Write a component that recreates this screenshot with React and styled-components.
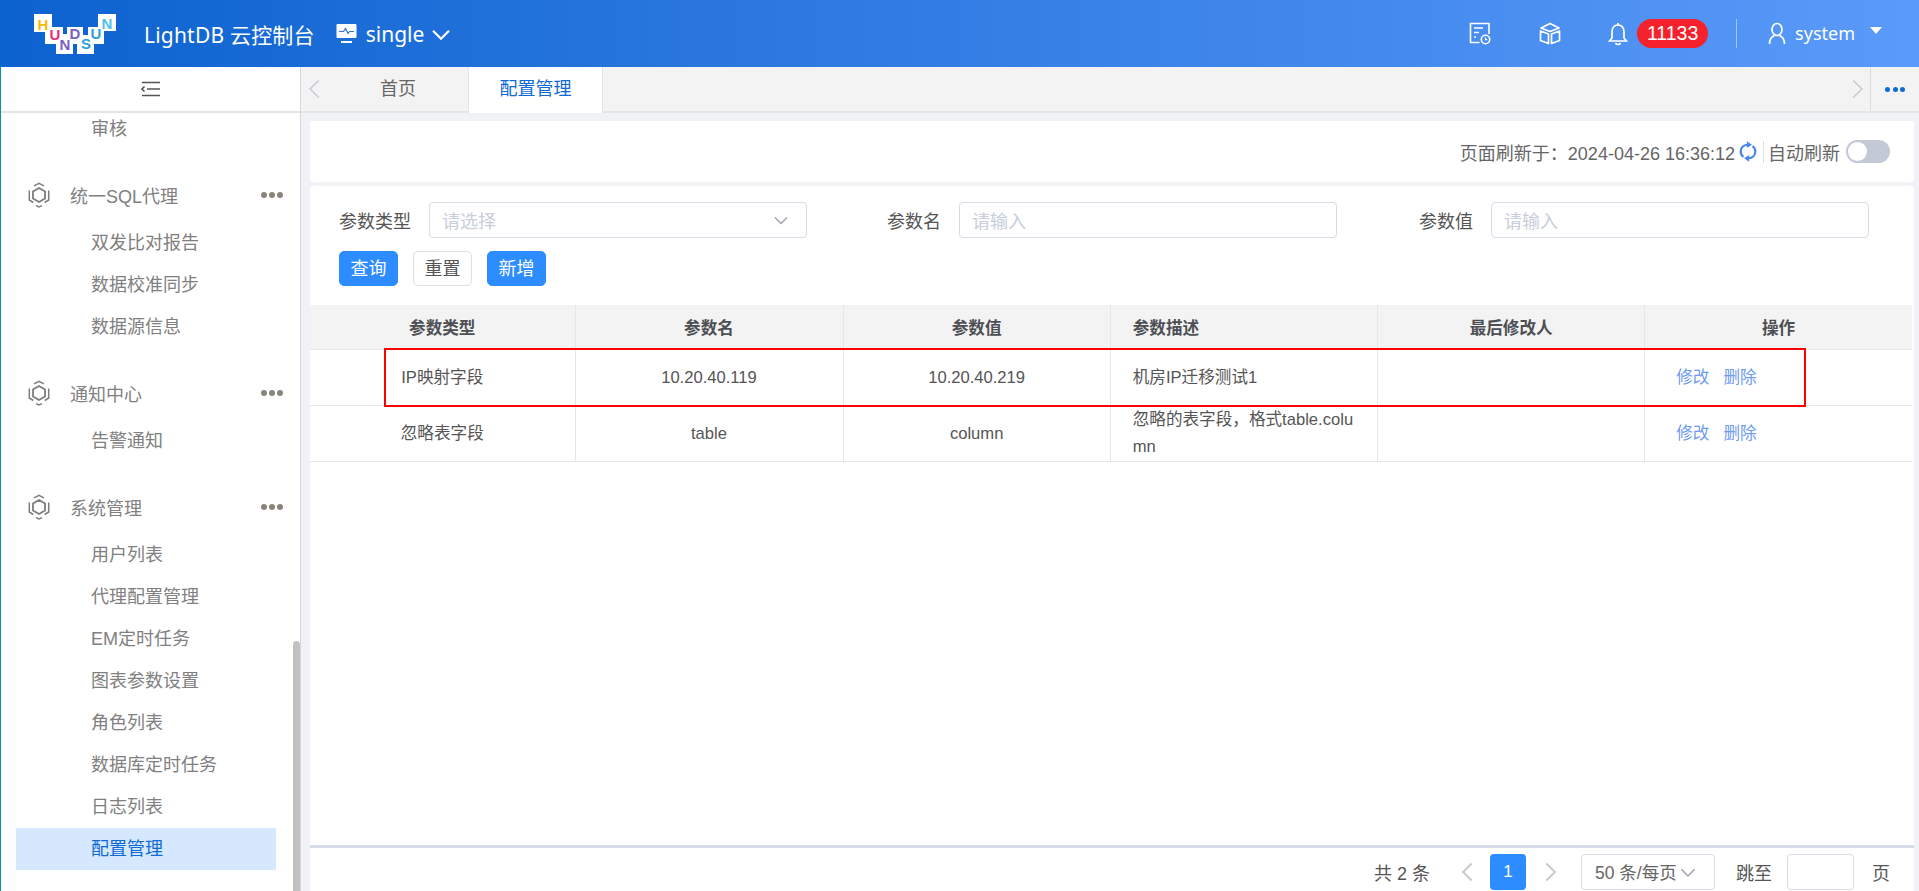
import styled, { createGlobalStyle } from "styled-components";

const GlobalStyle = createGlobalStyle`
  html, body {
    margin: 0;
    height: 100%;
    overflow: hidden;
    font-family: "Liberation Sans", "Noto Sans CJK SC", sans-serif;
    color: #555;
  }
  * { box-sizing: border-box; }
`;

const Page = styled.div`
  height: 100vh;
  display: flex;
  flex-direction: column;
  overflow: hidden;
`;

// top bar
const Header = styled.header`
  height: 67px;
  flex: none;
  display: flex;
  align-items: center;
  padding-left: 34px;
  color: #fff;
  background: linear-gradient(90deg, #0c62cf 0%, #5a9af9 100%);
`;

const Title = styled.div`
  margin-left: 28px;
  font-family: "Noto Sans", "Noto Sans CJK SC", sans-serif;
  font-size: 21px;
  letter-spacing: 0.2px;
`;

const Instance = styled.div`
  margin-left: 21px;
  display: flex;
  align-items: center;
  gap: 9px;
  font-family: "Noto Sans", "Noto Sans CJK SC", sans-serif;
  font-size: 21px;

  svg:last-child { margin-left: -4px; }
`;

const HeaderRight = styled.div`
  margin-left: auto;
  display: flex;
  align-items: center;
  padding-right: 37px;
`;

const HeaderIcon = styled.span`
  display: flex;
  margin-right: ${(p) => p.$gap}px;
`;

const Badge = styled.span`
  width: 71px;
  height: 29px;
  margin-left: 9px;
  border-radius: 15px;
  background: #f5222d;
  font-size: 19.5px;
  line-height: 29px;
  text-align: center;
`;

const HeaderDivider = styled.span`
  width: 1px;
  height: 29px;
  margin: 0 31px 0 28px;
  background: rgba(255, 255, 255, 0.45);
`;

const UserName = styled.span`
  margin: 0 15px 0 9px;
  font-family: "Noto Sans", sans-serif;
  font-size: 18px;
  position: relative;
  top: -1px;
`;

const Caret = styled.span`
  width: 0;
  height: 0;
  margin-top: -6px;
  border-left: 6px solid transparent;
  border-right: 6px solid transparent;
  border-top: 7px solid #fff;
`;

const Body = styled.div`
  flex: 1;
  min-height: 0;
  display: flex;
`;

// left menu
const Sidebar = styled.aside`
  width: 301px;
  flex: none;
  position: relative;
  display: flex;
  flex-direction: column;
  background: #fff;
  border-left: 1px solid #0a8fa8;
  border-right: 1px solid #d3d7e0;
  overflow: hidden;
`;

const Collapse = styled.div`
  height: 46px;
  flex: none;
  display: flex;
  align-items: center;
  justify-content: center;
  border-bottom: 2px solid #e4e4e4;
`;

const MenuList = styled.nav`
  margin-top: -5px;
  padding-right: 24px;
`;

const MenuItem = styled.div`
  height: 42px;
  margin-left: 15px;
  padding-left: 75px;
  font-size: 18px;
  line-height: 42px;
  color: ${(p) => (p.$active ? "#0e6ad6" : "#808080")};
  background: ${(p) => (p.$active ? "#d6e8fd" : "transparent")};
`;

const MenuGroup = styled.div`
  height: 54px;
  margin-top: 18px;
  padding: 0 0 0 27px;
  margin-right: -7px;
  display: flex;
  align-items: center;
  font-size: 18px;
  color: #808080;
`;

const GroupName = styled.span`
  margin-left: 20px;
`;

const Dots = styled.span`
  margin-left: auto;
  display: flex;
  gap: ${(p) => p.$gap}px;

  i {
    width: ${(p) => p.$size}px;
    height: ${(p) => p.$size}px;
    border-radius: 50%;
    background: ${(p) => p.$color};
  }
`;

const ScrollThumb = styled.div`
  position: absolute;
  right: 0;
  top: 574px;
  bottom: 0;
  width: 7px;
  border-radius: 4px 4px 0 0;
  background: #c1c1c1;
`;

const Main = styled.main`
  flex: 1;
  min-width: 0;
  display: flex;
  flex-direction: column;
  background: #f0f2f6;
`;

const TabBar = styled.div`
  height: 46px;
  flex: none;
  display: flex;
  background: #f3f3f3;
  border-bottom: 2px solid #e6e6e6;
`;

const TabArrow = styled.span`
  width: ${(p) => p.$w}px;
  display: flex;
  align-items: center;
  justify-content: center;
  color: #c6ccd6;
`;

const Tab = styled.div`
  width: ${(p) => p.$w}px;
  height: 46px;
  flex: none;
  font-size: 18px;
  line-height: 44px;
  text-align: center;
  color: ${(p) => (p.$active ? "#0e6ad6" : "#666")};
  background: ${(p) => (p.$active ? "#fff" : "transparent")};
  border-left: ${(p) => (p.$active ? "1px solid #e4e4e4" : "none")};
  border-right: ${(p) => (p.$active ? "1px solid #e4e4e4" : "none")};
`;

const TabEnd = styled.div`
  margin-left: auto;
  display: flex;
`;

const TabMore = styled.span`
  width: 49px;
  display: flex;
  align-items: center;
  justify-content: center;
  border-left: 1px solid #dcdcdc;

  span { margin-left: 0; }
`;

const Content = styled.div`
  flex: 1;
  min-height: 0;
  display: flex;
  flex-direction: column;
  gap: 4px;
  padding: 8px 5px 0 9px;
`;

const RefreshCard = styled.div`
  height: 61px;
  flex: none;
  display: flex;
  align-items: center;
  justify-content: flex-end;
  padding-right: 24px;
  background: #fff;
  border-radius: 3px;
  font-size: 18px;
  color: #666;
`;

const RefreshDivider = styled.span`
  width: 1px;
  height: 22px;
  margin: 0 4px;
  background: #dcdfe6;
`;

const RefreshButton = styled.span`
  display: flex;
  margin: 0 2px 0 4px;
`;

const Toggle = styled.span`
  width: 44px;
  height: 23px;
  margin-left: 6px;
  padding: 2px;
  border-radius: 12px;
  background: #c3cad6;

  i {
    display: block;
    width: 19px;
    height: 19px;
    border-radius: 50%;
    background: #fff;
  }
`;

const TableCard = styled.section`
  flex: 1;
  min-height: 0;
  display: flex;
  flex-direction: column;
  background: #fff;
  border-radius: 3px 3px 0 0;
`;

const FilterRow = styled.div`
  display: grid;
  grid-template-columns: 468px 530px 532px;
  margin: 16px 0 0 29px;
`;

const Field = styled.label`
  display: flex;
  align-items: center;
`;

const FieldLabel = styled.span`
  flex: 1;
  padding-right: ${(p) => (p.$first ? 0 : 18)}px;
  font-size: 18px;
  text-align: ${(p) => (p.$first ? "left" : "right")};
  color: #555;
`;

const FakeInput = styled.div`
  width: 378px;
  height: 36px;
  display: flex;
  align-items: center;
  justify-content: space-between;
  padding: 0 16px 0 12px;
  border: 1px solid #d8dce6;
  border-radius: 4px;
  font-size: 18px;
  color: #c8cedb;
`;

const ButtonRow = styled.div`
  display: flex;
  gap: 15px;
  margin: 13px 0 19px 29px;
`;

const Button = styled.button`
  width: 59px;
  height: 35px;
  padding: 0 0 3px;
  border: 1px solid ${(p) => (p.$primary ? "#2d8cff" : "#dcdfe6")};
  border-radius: 5px;
  font: inherit;
  font-size: 18px;
  color: ${(p) => (p.$primary ? "#fff" : "#555")};
  background: ${(p) => (p.$primary ? "#2d8cff" : "#fff")};
`;

const TableWrap = styled.div`
  position: relative;
  flex: 1;
  min-height: 0;
  margin-right: 2px;
`;

const Table = styled.table`
  width: 100%;
  table-layout: fixed;
  border-collapse: collapse;
  font-size: 16.6px;
  color: #555;
`;

const Th = styled.th`
  height: 44px;
  padding: 0;
  font-weight: 700;
  font-size: 16.6px;
  width: ${(p) => p.$w || "auto"};
  text-align: ${(p) => p.$align || "center"};
  padding-left: ${(p) => p.$pad || 0}px;
  color: #4d4f54;
  background: #f3f3f3;
  border-left: 1px solid #e6e6e6;
  border-bottom: 1px solid #e6e6e6;

  &:first-child { border-left: none; }
`;

const Td = styled.td`
  height: 56px;
  padding: 0 ${(p) => (p.$pad ? 20 : 0)}px 0 ${(p) => p.$pad || 0}px;
  text-align: ${(p) => (p.$pad ? "left" : "center")};
  line-height: 27px;
  word-break: break-all;
  border-left: 1px solid #e6e6e6;
  border-bottom: 1px solid #e6e6e6;

  &:first-child { border-left: none; }
`;

const RowAction = styled.a`
  margin-right: 14px;
  color: #6f9bef;
`;

// the red box somebody drew on the screenshot
const Annotation = styled.div`
  position: absolute;
  left: 74px;
  top: 43px;
  width: 1422px;
  height: 59px;
  border: 2px solid #ff0000;
  pointer-events: none;
`;

const Pager = styled.footer`
  height: 46px;
  flex: none;
  display: flex;
  align-items: center;
  justify-content: flex-end;
  padding: 4px 24px 0 0;
  border-top: 3px solid #d8dce8;
  font-size: 18px;
  color: #555;
`;

const PageArrow = styled.span`
  display: flex;
  margin: ${(p) => p.$margin};
  color: #c9c9c9;
`;

const PageNumber = styled.span`
  width: 36px;
  height: 36px;
  border-radius: 4px;
  background: #2d8cff;
  color: #fff;
  font-size: 17px;
  line-height: 36px;
  text-align: center;
`;

const PageSize = styled.div`
  width: 134px;
  height: 36px;
  margin-right: 21px;
  display: flex;
  align-items: center;
  gap: 1px;
  padding: 0 0 0 13px;
  border: 1px solid #d8dce6;
  border-radius: 4px;
  font-size: 17.5px;
  color: #666;
`;

const PageJump = styled.div`
  width: 67px;
  height: 36px;
  margin: 0 18px 0 15px;
  border: 1px solid #d8dce6;
  border-radius: 4px;
`;

const Logo = () => {
  const blocks = [
    [34, 17, 18, 18], [45, 30, 18, 17], [56, 37, 17, 20], [67, 30, 16, 17],
    [77, 38, 17, 19], [88, 30, 16, 17], [98, 17, 18, 17],
  ];
  const letters = [
    ["H", 43, 33, "#f9b90c"], ["U", 55, 43, "#e8307f"], ["N", 65, 53, "#7a5fc4"],
    ["D", 75, 42, "#7a5fc4"], ["S", 86, 52, "#2e9fd8"], ["U", 96, 42, "#2e9fd8"],
    ["N", 107, 32, "#4dc3ea"],
  ];
  return (
    <svg width="82" height="41" viewBox="34 16 82 41" aria-label="HUNDSUN">
      {blocks.map(([x, y, w, h], i) => (
        <rect key={i} x={x} y={y} width={w} height={h} fill="#fff" />
      ))}
      {letters.map(([t, x, y, c], i) => (
        <text key={i} x={x} y={y} fill={c} fontSize="15" fontWeight="700" textAnchor="middle" fontFamily="Liberation Sans, sans-serif">
          {t}
        </text>
      ))}
    </svg>
  );
};

const MonitorIcon = () => (
  <svg width="21" height="21" viewBox="0 0 21 21">
    <rect x="0.5" y="1" width="20" height="14" rx="1" fill="#fff" />
    <path d="M3 8.5h4.5l2-3 2.5 5 1.6-2h4.4" fill="none" stroke="#2a78dd" strokeWidth="1.2" />
    <path d="M5 19h11" stroke="#fff" strokeWidth="2" />
  </svg>
);

const Chevron = ({ size = 18, dir = "down", color = "currentColor", width = 1.6 }) => {
  const paths = {
    down: "M3 6.5l6 6 6-6",
    left: "M12 2L5 9l7 7",
    right: "M6 2l7 7-7 7",
  };
  return (
    <svg width={size} height={size} viewBox="0 0 18 18">
      <path d={paths[dir]} fill="none" stroke={color} strokeWidth={width} />
    </svg>
  );
};

const DocClockIcon = () => (
  <svg width="22" height="23" viewBox="0 0 22 23" fill="none" stroke="#fff" strokeWidth="1.6">
    <path d="M10.5 20.5H1.5V1.5H20V12" />
    <path d="M5 6h9M5 10.5h5M5 15h2" />
    <circle cx="16.5" cy="17.5" r="4.2" />
    <path d="M16.5 15.5v2.2h1.8" strokeWidth="1.2" />
  </svg>
);

const CubeIcon = () => (
  <svg width="22" height="23" viewBox="0 0 22 23" fill="none" stroke="#fff" strokeWidth="1.7" strokeLinejoin="round">
    <path d="M11 1.5L20 6l-9 3.5L2 6z" />
    <path d="M1.5 9v9.5l8 3V12zM20.5 9v9.5l-8 3V12z" />
  </svg>
);

const BellIcon = () => (
  <svg width="20" height="24" viewBox="0 0 20 24" fill="none" stroke="#fff" strokeWidth="1.7">
    <path d="M10 3C6 3 4 6 4 10v6l-2.5 3h17L16 16v-6C16 6 14 3 10 3zM10 1v2" />
    <path d="M7.5 21c.5 1 1.5 1.5 2.5 1.5s2-.5 2.500-1.500" />
  </svg>
);

const UserIcon = () => (
  <svg width="18" height="24" viewBox="0 0 18 24" fill="none" stroke="#fff" strokeWidth="1.7">
    <ellipse cx="9" cy="7.5" rx="5" ry="6" />
    <path d="M1.5 22c0-4.5 2.5-7.5 5-8.5M16.5 22c0-4.5-2.5-7.5-5-8.5" />
  </svg>
);

const CollapseIcon = () => (
  <svg width="20" height="16" viewBox="0 0 20 16" fill="none" stroke="#555" strokeWidth="1.6">
    <path d="M1 1.5h18M6 8h13M1 14.5h18" />
    <path d="M3.5 5.5L1 8l2.5 2.5" />
  </svg>
);

const HexIcon = () => (
  <svg width="22" height="26" viewBox="0 0 22 26" fill="none" stroke="#7d7d7d">
    <path d="M6 3.8l5-2.500 5 2.500M20.700 8.500V18l-4 2.500M1.300 8.500V18l4 2.500M8 23.600l3 1.300 3-1.300" strokeWidth="1.5" />
    <path d="M11 6l6 3.500v7L11 20l-6-3.500v-7z" strokeWidth="1.8" />
  </svg>
);

const SyncIcon = () => (
  <svg width="18" height="21" viewBox="0 0 16 20" preserveAspectRatio="none" fill="none" stroke="#4a86f0" strokeWidth="2">
    <path d="M7.5 3.5C4 3.8 1.500 6.500 1.500 10c0 2.200 1 4 2.500 5.200" />
    <path d="M8.500 16.500c3.500-.3 6-3 6-6.500 0-2.200-1-4-2.500-5.200" />
    <path d="M7 .3v6.400l4.500-3.200zM9 13.300v6.400l-4.500-3.200z" fill="#4a86f0" stroke="none" />
  </svg>
);

const ThreeDots = ({ color, size = 6, gap = 2 }) => (
  <Dots $color={color} $size={size} $gap={gap}>
    <i />
    <i />
    <i />
  </Dots>
);

const sections = [
  { name: "统一SQL代理", items: ["双发比对报告", "数据校准同步", "数据源信息"] },
  { name: "通知中心", items: ["告警通知"] },
  {
    name: "系统管理",
    items: ["用户列表", "代理配置管理", "EM定时任务", "图表参数设置", "角色列表", "数据库定时任务", "日志列表", "配置管理"],
  },
];

const rows = [
  { type: "IP映射字段", name: "10.20.40.119", value: "10.20.40.219", desc: "机房IP迁移测试1" },
  { type: "忽略表字段", name: "table", value: "column", desc: "忽略的表字段，格式table.column" },
];

export default function App() {
  return (
    <Page>
      <GlobalStyle />
      <Header>
        <Logo />
        <Title>LightDB 云控制台</Title>
        <Instance>
          <MonitorIcon />
          single
          <Chevron size={24} />
        </Instance>
        <HeaderRight>
          <HeaderIcon $gap={48}><DocClockIcon /></HeaderIcon>
          <HeaderIcon $gap={47}><CubeIcon /></HeaderIcon>
          <BellIcon />
          <Badge>11133</Badge>
          <HeaderDivider />
          <UserIcon />
          <UserName>system</UserName>
          <Caret />
        </HeaderRight>
      </Header>
      <Body>
        <Sidebar>
          <Collapse><CollapseIcon /></Collapse>
          <MenuList>
            <MenuItem>审核</MenuItem>
            {sections.map((s) => (
              <div key={s.name}>
                <MenuGroup>
                  <HexIcon />
                  <GroupName>{s.name}</GroupName>
                  <ThreeDots color="#8a857c" />
                </MenuGroup>
                {s.items.map((item) => (
                  <MenuItem key={item} $active={item === "配置管理"}>{item}</MenuItem>
                ))}
              </div>
            ))}
          </MenuList>
          <ScrollThumb />
        </Sidebar>
        <Main>
          <TabBar>
            <TabArrow $w={27}><Chevron size={22} dir="left" width={1.3} /></TabArrow>
            <Tab $w={140}>首页</Tab>
            <Tab $w={135} $active>配置管理</Tab>
            <TabEnd>
              <TabArrow $w={26}><Chevron size={22} dir="right" width={1.3} /></TabArrow>
              <TabMore><ThreeDots color="#0e6ad6" size={5} gap={2.5} /></TabMore>
            </TabEnd>
          </TabBar>
          <Content>
            <RefreshCard>
              页面刷新于：2024-04-26 16:36:12
              <RefreshButton><SyncIcon /></RefreshButton>
              <RefreshDivider />
              自动刷新
              <Toggle><i /></Toggle>
            </RefreshCard>
            <TableCard>
              <FilterRow>
                <Field>
                  <FieldLabel $first>参数类型</FieldLabel>
                  <FakeInput>
                    请选择
                    <Chevron color="#9aa0ab" width={1.3} />
                  </FakeInput>
                </Field>
                <Field>
                  <FieldLabel>参数名</FieldLabel>
                  <FakeInput>请输入</FakeInput>
                </Field>
                <Field>
                  <FieldLabel>参数值</FieldLabel>
                  <FakeInput>请输入</FakeInput>
                </Field>
              </FilterRow>
              <ButtonRow>
                <Button $primary>查询</Button>
                <Button>重置</Button>
                <Button $primary>新增</Button>
              </ButtonRow>
              <TableWrap>
                <Table>
                  <thead>
                    <tr>
                      <Th $w="265px">参数类型</Th>
                      <Th $w="268px">参数名</Th>
                      <Th>参数值</Th>
                      <Th $align="left" $pad={22}>参数描述</Th>
                      <Th>最后修改人</Th>
                      <Th>操作</Th>
                    </tr>
                  </thead>
                  <tbody>
                    {rows.map((r) => (
                      <tr key={r.type}>
                        <Td>{r.type}</Td>
                        <Td>{r.name}</Td>
                        <Td>{r.value}</Td>
                        <Td $pad={22}>{r.desc}</Td>
                        <Td />
                        <Td $pad={31}>
                          <RowAction>修改</RowAction>
                          <RowAction>删除</RowAction>
                        </Td>
                      </tr>
                    ))}
                  </tbody>
                </Table>
                <Annotation />
              </TableWrap>
              <Pager>
                共 2 条
                <PageArrow $margin="0 11px 0 27px"><Chevron size={22} dir="left" /></PageArrow>
                <PageNumber>1</PageNumber>
                <PageArrow $margin="0 20px 0 13px"><Chevron size={22} dir="right" /></PageArrow>
                <PageSize>
                  50 条/每页
                  <Chevron color="#9aa0ab" width={1.3} size={20} />
                </PageSize>
                跳至
                <PageJump />
                页
              </Pager>
            </TableCard>
          </Content>
        </Main>
      </Body>
    </Page>
  );
}
